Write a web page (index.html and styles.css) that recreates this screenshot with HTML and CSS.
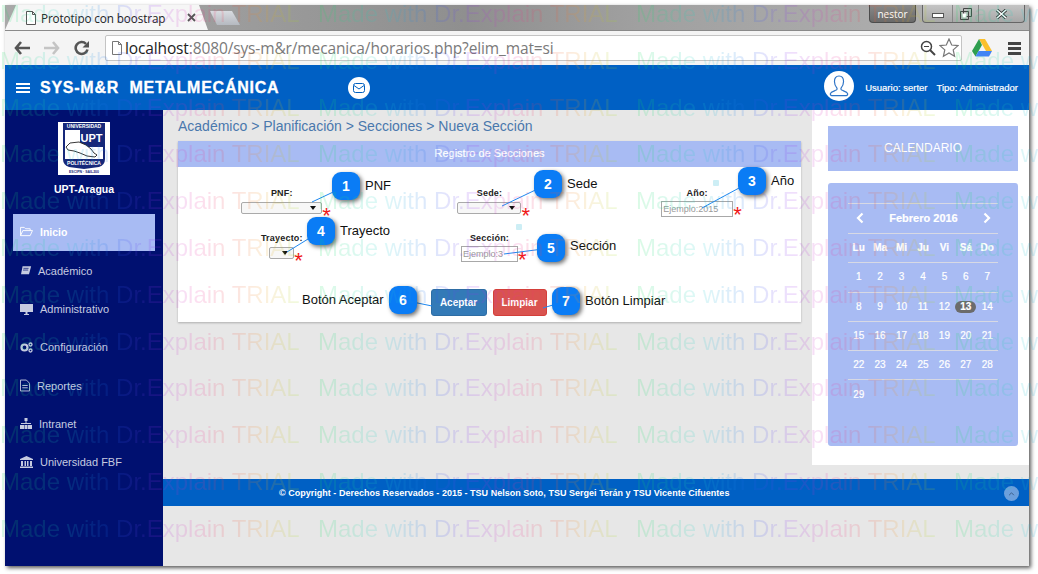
FILE: index.html
```html
<!DOCTYPE html>
<html lang="es">
<head>
<meta charset="utf-8">
<title>Prototipo con boostrap</title>
<link rel="stylesheet" href="styles.css">
</head>
<body>
<div class="window">
  <div class="tabstrip">
    <div class="tab">
      <svg class="tab-file" viewBox="0 0 12 14" width="12" height="14"><path d="M1.5.5h6l3 3v10h-9z M7.5.5v3h3" fill="#fff" stroke="#555"/></svg>
      <span class="tab-title">Prototipo con boostrap</span>
      <svg class="tab-close" viewBox="0 0 9 9" width="9" height="9"><path d="M1 1l7 7M8 1l-7 7" stroke="#555" stroke-width="1.8"/></svg>
    </div>
    <div class="newtab"></div>
    <div class="spacer"></div>
    <div class="user-chip">nestor</div>
    <div class="winbtns">
      <div class="winbtn wb-min"><svg viewBox="0 0 12 6" width="12" height="6"><rect x=".5" y=".5" width="11" height="4" fill="#fff" stroke="#555"/></svg></div>
      <div class="winbtn wb-max"><svg viewBox="0 0 12 12" width="12" height="12"><path d="M3.5.5h8v8h-8zM.5 3.5h8v8h-8z" fill="none" stroke="#444"/><rect x="2.5" y="5.5" width="4" height="4" fill="#fff"/></svg></div>
      <div class="winbtn wb-close"><svg viewBox="0 0 13 10" width="13" height="10"><path d="M2 1l9 8M11 1l-9 8" stroke="#333" stroke-width="3.2"/><path d="M2 1l9 8M11 1l-9 8" stroke="#fff" stroke-width="1.6"/></svg></div>
    </div>
  </div>
  <div class="toolbar">
    <svg class="tb-ico" viewBox="0 0 16 14" width="16" height="14"><path d="M7 1L2 7l5 6M2.500 7H16" fill="none" stroke="#555" stroke-width="2.6"/></svg>
    <svg class="tb-ico" viewBox="0 0 16 14" width="16" height="14"><path d="M9 1l5 6-5 6M13.500 7H0" fill="none" stroke="#c4c4c4" stroke-width="2.600"/></svg>
    <svg class="tb-ico" viewBox="0 0 16 16" width="16" height="16"><path d="M13.500 9.500A6 6 0 1 1 12 3.800" fill="none" stroke="#555" stroke-width="2.600"/><path d="M15 1v6.500H8.500z" fill="#555"/></svg>
    <div class="omnibox">
      <svg class="omni-file" viewBox="0 0 12 14" width="12" height="14"><path d="M1.500.5h6l3 3v10h-9z M7.500.5v3h3" fill="#fff" stroke="#777"/></svg>
      <span class="url"><span class="host">localhost</span>:8080/sys-m&amp;r/mecanica/horarios.php?elim_mat=si</span>
      <span class="omni-gap"></span>
      <svg viewBox="0 0 16 16" width="16" height="16"><circle cx="6.500" cy="6.500" r="5" fill="none" stroke="#444" stroke-width="1.500"/><path d="M10 10l5 5" stroke="#444" stroke-width="2"/><path d="M4 6.500h5" stroke="#444"/></svg>
      <svg class="omni-star" viewBox="0 0 20 20" width="20" height="20"><path d="M10 1l2.700 6 6.300.6-4.800 4.300 1.400 6.400L10 15l-5.600 3.300 1.400-6.400L1 7.600 7.300 7z" fill="#fff" stroke="#777" stroke-width="1.200"/></svg>
    </div>
    <svg class="tb-drive" viewBox="0 0 20 18" width="20" height="18"><path d="M7 0h6l7 12h-6z" fill="#fbc02d"/><path d="M7 0l3 6-6.500 11.500L0 12z" fill="#2e9e4f"/><path d="M6.500 12H20l-3 5.500H3.500z" fill="#4285f4"/></svg>
    <div class="tb-menu"><i></i><i></i><i></i></div>
  </div>

  <header class="appbar">
    <svg class="bars" viewBox="0 0 14 10" width="14" height="10"><path d="M0 0h14v2H0zM0 4h14v2H0zM0 8h14v2H0z" fill="#fff"/></svg>
    <span class="brand">SYS-M&amp;R&nbsp; METALMECÁNICA</span>
    <span class="mail"><svg viewBox="0 0 12 10" width="12" height="10"><rect x=".5" y=".5" width="11" height="9" rx="2" fill="none" stroke="#0060c0"/><path d="M1 2.500l5 3.500 5-3.500" fill="none" stroke="#0060c0"/></svg></span>
    <span class="bar-gap"></span>
    <span class="avatar"><svg viewBox="0 0 22 24" width="20" height="22"><path d="M11 1c-3.600 0-5 2.800-5 6 0 3 1.300 5.500 2.600 7 .5.800.3 2-.6 2.500-2 1-6 1.800-6.500 3.800-.2 1 .3 2.200 1.500 2.200h16c1.200 0 1.700-1.200 1.500-2.200-.5-2-4.500-2.800-6.500-3.800-.9-.5-1.100-1.700-.6-2.500 1.300-1.500 2.600-4 2.600-7 0-3.200-1.400-6-5-6z" fill="none" stroke="#2f74c6" stroke-width="1.300"/></svg></span>
    <span class="who">Usuario: serter</span>
    <span class="who who-2">Tipo: Administrador</span>
  </header>

  <div class="body">
    <aside class="sidebar">
      <svg class="logo" viewBox="0 0 52 53" width="52" height="53">
        <rect width="52" height="53" fill="#fff"/>
        <path d="M5 1h42v36q0 6-6 8l-15 2-15-2q-6-2-6-8z" fill="#16287a"/>
        <rect x="7" y="8" width="38" height="29" fill="#fff"/>
        <rect x="22" y="8" width="23" height="17" fill="#16287a"/>
        <path d="M8 25l4-4 9-1 7 3 5 4 3 4 3 2-2 2-8-1-7-3-6-2-6-1z" fill="#fff" stroke="#222" stroke-width=".9"/>
        <text class="logo-big" x="33.500" y="20">UPT</text>
        <text class="logo-tiny" x="26" y="6">UNIVERSIDAD</text>
        <text class="logo-tiny" x="26" y="43">POLITÉCNICA</text>
        <text class="logo-micro" x="26" y="51">ESCIPN · SAIL200</text>
      </svg>
      <div class="school">UPT-Aragua</div>
      <nav class="nav">
        <a class="item active"><svg viewBox="0 0 14 12" width="13" height="11"><path d="M.5 10.500V1.500h4l1.500 1.500h5v2M.5 10.500l2.500-5.500h10.500l-2.500 5.500z" fill="none" stroke="#fff"/></svg><span class="tx-0">Inicio</span></a>
        <a class="item"><svg viewBox="0 0 14 12" width="12" height="11"><path d="M3 1h10l-2.500 9.500H1.200z" fill="#c6cbe0"/><path d="M4 3.500h6M3.500 5.500h6" stroke="#00106e" stroke-width=".8"/></svg><span class="tx-1">Académico</span></a>
        <a class="item"><svg viewBox="0 0 13 12" width="13" height="12"><path d="M0 1h13v8H0zM4 11h5v1H4zM5.500 9h2v2h-2z" fill="#c6cbe0"/></svg><span class="tx-0">Administrativo</span></a>
        <a class="item"><svg viewBox="0 0 13 11" width="13" height="11"><circle cx="4.500" cy="5.500" r="3" fill="none" stroke="#c6cbe0" stroke-width="2.200"/><circle cx="10.500" cy="2.500" r="1.500" fill="none" stroke="#c6cbe0" stroke-width="1.300"/><circle cx="10.500" cy="8.500" r="1.500" fill="none" stroke="#c6cbe0" stroke-width="1.300"/></svg><span class="tx-0">Configuración</span></a>
        <a class="item"><svg viewBox="0 0 11 13" width="10" height="13"><path d="M.5.500h6.500l3.500 3.500v8.500H.5z" fill="none" stroke="#c6cbe0"/><path d="M2.500 6.500h6M2.500 9h6" stroke="#c6cbe0"/></svg><span class="tx-2">Reportes</span></a>
        <a class="item"><svg viewBox="0 0 12 11" width="12" height="11"><path d="M4.500 0h3v3h-3zM5.500 3h1v2h-1zM1 5h10v1H1zM0 7h4v4H0zM4.500 7h3v4h-3zM8 7h4v4H8z" fill="#c6cbe0"/></svg><span class="tx-3">Intranet</span></a>
        <a class="item"><svg viewBox="0 0 13 12" width="13" height="12"><path d="M6.500 0l6.500 3v1H0V3zM1 5h2v5H1zM4.500 5h1.500v5H4.500zM7 5h1.500v5H7zM10 5h2v5h-2zM0 10.500h13V12H0z" fill="#c6cbe0"/></svg><span class="tx-0">Universidad FBF</span></a>
      </nav>
    </aside>

    <div class="main">
      <div class="columns">
        <section class="content">
          <div class="crumbs">Académico &gt; Planificación &gt; Secciones &gt; Nueva Sección</div>
          <div class="panel">
            <div class="panel-head">Registro de Secciones</div>
            <form class="form">
              <div class="field"><label>PNF:</label><div class="ctl"><span class="sel sel-pnf"></span><b class="req">*</b></div></div>
              <div class="field"><label>Sede:</label><div class="ctl"><span class="sel sel-sede"></span><b class="req">*</b></div></div>
              <div class="field field-in"><label>Año:</label><div class="ctl"><span class="inp inp-ano">Ejemplo:2015</span><b class="req">*</b></div><i class="dot dot-ano"></i></div>
              <div class="field"><label>Trayecto:</label><div class="ctl"><span class="sel sel-tra"></span><b class="req">*</b></div></div>
              <div class="field field-in"><label>Sección:</label><div class="ctl"><span class="inp inp-sec">Ejemplo:3</span><b class="req">*</b></div><i class="dot dot-sec"></i></div>
            </form>
            <div class="actions">
              <button type="button" class="btn btn-blue">Aceptar</button>
              <button type="button" class="btn btn-red">Limpiar</button>
            </div>
          </div>
        </section>
        <aside class="rail">
          <div class="cal-title">CALENDARIO</div>
          <div class="cal">
            <div class="cal-head">
              <svg viewBox="0 0 8 12" width="8" height="12"><path d="M6.500 1.500L2 6l4.500 4.500" fill="none" stroke="#fff" stroke-width="2.200"/></svg>
              <span>Febrero 2016</span>
              <svg viewBox="0 0 8 12" width="8" height="12"><path d="M1.500 1.500L6 6l-4.500 4.500" fill="none" stroke="#fff" stroke-width="2.200"/></svg>
            </div>
            <div class="cal-row cal-days"><span>Lu</span><span>Ma</span><span>Mi</span><span>Ju</span><span>Vi</span><span>Sá</span><span>Do</span></div>
            <div class="cal-row"><span>1</span><span>2</span><span>3</span><span>4</span><span>5</span><span>6</span><span>7</span></div>
            <div class="cal-row"><span>8</span><span>9</span><span>10</span><span>11</span><span>12</span><span class="today">13</span><span>14</span></div>
            <div class="cal-row"><span>15</span><span>16</span><span>17</span><span>18</span><span>19</span><span>20</span><span>21</span></div>
            <div class="cal-row"><span>22</span><span>23</span><span>24</span><span>25</span><span>26</span><span>27</span><span>28</span></div>
            <div class="cal-row"><span>29</span></div>
          </div>
        </aside>
      </div>
      <footer class="foot">
        <span>© Copyright - Derechos Reservados - 2015 - TSU Nelson Soto, TSU Sergei Terán y TSU Vicente Cifuentes</span>
        <span class="totop"><svg viewBox="0 0 8 5" width="7" height="4"><path d="M1 4l3-3 3 3" fill="none" stroke="#34507a"/></svg></span>
      </footer>
    </div>
  </div>
</div>

<svg class="leaders" width="1038" height="574" viewBox="0 0 1038 574">
  <g stroke="#1e88f0" stroke-width="1" fill="none">
    <path d="M346 186L312 202"/>
    <path d="M548 184L502 206"/>
    <path d="M752 181L702 208"/>
    <path d="M321 231L287 252"/>
    <path d="M551 248L504 254"/>
    <path d="M403 300L432 306"/>
    <path d="M566 301L543 308"/>
  </g>
</svg>
<div class="note n1">1</div><span class="note-tx t1">PNF</span>
<div class="note n2">2</div><span class="note-tx t2">Sede</span>
<div class="note n3">3</div><span class="note-tx t3">Año</span>
<div class="note n4">4</div><span class="note-tx t4">Trayecto</span>
<div class="note n5">5</div><span class="note-tx t5">Sección</span>
<div class="note n6">6</div><span class="note-tx t6">Botón Aceptar</span>
<div class="note n7">7</div><span class="note-tx t7">Botón Limpiar</span>

<div class="wm" aria-hidden="true">
  <div class="wm-row"><span>Made with Dr.Explain TRIAL</span><span>Made with Dr.Explain TRIAL</span><span>Made with Dr.Explain TRIAL</span><span>Made with Dr.Explain TRIAL</span></div>
  <div class="wm-row"><span>Made with Dr.Explain TRIAL</span><span>Made with Dr.Explain TRIAL</span><span>Made with Dr.Explain TRIAL</span><span>Made with Dr.Explain TRIAL</span></div>
  <div class="wm-row"><span>Made with Dr.Explain TRIAL</span><span>Made with Dr.Explain TRIAL</span><span>Made with Dr.Explain TRIAL</span><span>Made with Dr.Explain TRIAL</span></div>
  <div class="wm-row"><span>Made with Dr.Explain TRIAL</span><span>Made with Dr.Explain TRIAL</span><span>Made with Dr.Explain TRIAL</span><span>Made with Dr.Explain TRIAL</span></div>
  <div class="wm-row"><span>Made with Dr.Explain TRIAL</span><span>Made with Dr.Explain TRIAL</span><span>Made with Dr.Explain TRIAL</span><span>Made with Dr.Explain TRIAL</span></div>
  <div class="wm-row"><span>Made with Dr.Explain TRIAL</span><span>Made with Dr.Explain TRIAL</span><span>Made with Dr.Explain TRIAL</span><span>Made with Dr.Explain TRIAL</span></div>
  <div class="wm-row"><span>Made with Dr.Explain TRIAL</span><span>Made with Dr.Explain TRIAL</span><span>Made with Dr.Explain TRIAL</span><span>Made with Dr.Explain TRIAL</span></div>
  <div class="wm-row"><span>Made with Dr.Explain TRIAL</span><span>Made with Dr.Explain TRIAL</span><span>Made with Dr.Explain TRIAL</span><span>Made with Dr.Explain TRIAL</span></div>
  <div class="wm-row"><span>Made with Dr.Explain TRIAL</span><span>Made with Dr.Explain TRIAL</span><span>Made with Dr.Explain TRIAL</span><span>Made with Dr.Explain TRIAL</span></div>
  <div class="wm-row"><span>Made with Dr.Explain TRIAL</span><span>Made with Dr.Explain TRIAL</span><span>Made with Dr.Explain TRIAL</span><span>Made with Dr.Explain TRIAL</span></div>
  <div class="wm-row"><span>Made with Dr.Explain TRIAL</span><span>Made with Dr.Explain TRIAL</span><span>Made with Dr.Explain TRIAL</span><span>Made with Dr.Explain TRIAL</span></div>
  <div class="wm-row"><span>Made with Dr.Explain TRIAL</span><span>Made with Dr.Explain TRIAL</span><span>Made with Dr.Explain TRIAL</span><span>Made with Dr.Explain TRIAL</span></div>
</div>
</body>
</html>
```
FILE: styles.css
```css
* { box-sizing: border-box; }
html, body { margin: 0; height: 100%; }
body {
  position: relative;
  width: 1038px;
  height: 574px;
  overflow: hidden;
  background: #fff;
  font-family: "Liberation Sans", Arial, sans-serif;
}

/* browser window */
.window {
  margin: 5px 0 0 5px;
  width: 1024px;
  height: 561px;
  display: flex;
  flex-direction: column;
  box-shadow: 2px 2px 4px rgba(0,0,0,.65);
}
.tabstrip {
  height: 25px;
  flex: none;
  display: flex;
  align-items: flex-start;
  background: linear-gradient(90deg, #a9a9a9 0%, #8f8f8f 45%, #a0a0a0 62%, #b3b3b3 100%);
}
.tab {
  width: 203px;
  height: 25px;
  flex: none;
  display: flex;
  align-items: center;
  padding: 0 0 0 20px;
  background: #f6f6f6;
  clip-path: polygon(0 100%, 11px 0, 194px 0, 203px 100%);
}
.tab-title {
  margin-left: 4px;
  font: 11.700px "Open Sans", sans-serif;
  color: #222;
  letter-spacing: -.1px;
  white-space: nowrap;
}
.tab-close { margin-left: 22px; }
.newtab {
  width: 30px;
  height: 14px;
  margin: 6px 0 0 2px;
  background: linear-gradient(#d8dbe0, #b5b9c0);
  clip-path: polygon(0 0, 22px 0, 30px 100%, 7px 100%);
}
.spacer { flex: 1; }
.user-chip {
  width: 47px;
  height: 18px;
  margin-right: 6px;
  border: 1px solid #4c4c4c;
  border-top: 0;
  border-radius: 0 0 4px 4px;
  background: linear-gradient(#888, #6a6a6a);
  color: #fff;
  font: 10px/19px "Open Sans", sans-serif;
  text-align: center;
}
.winbtns {
  display: flex;
  height: 18px;
  margin-right: 4px;
  border: 1px solid #666;
  border-top: 0;
  border-radius: 0 0 4px 4px;
  background: linear-gradient(#c4c4c4, #a8a8a8);
}
.winbtn { display: flex; align-items: center; justify-content: center; border-left: 1px solid #888; }
.winbtn:first-child { border-left: 0; }
.wb-min { width: 29px; padding-top: 5px; }
.wb-max { width: 26px; }
.wb-close { width: 46px; }

.toolbar {
  height: 35px;
  flex: none;
  display: flex;
  align-items: center;
  padding: 0 8px 0 9px;
  background: #f4f4f4;
  border-top: 1px solid #8a8a8a;
}
.tb-ico { margin-right: 14px; flex: none; }
.omnibox {
  width: 861px;
  height: 26px;
  margin-left: 1px;
  display: flex;
  align-items: center;
  padding: 0 2px 0 5px;
  background: #fff;
  border: 1px solid #c4c4c4;
  border-radius: 2px;
}
.url {
  margin-left: 2px;
  font: 15.500px "Open Sans", sans-serif;
  letter-spacing: -.13px;
  color: #7a7a7a;
  white-space: nowrap;
}
.host { color: #222; }
.omni-gap { flex: 1; }
.omni-star { margin-left: 3px; }
.tb-drive { margin-left: 10px; flex: none; }
.tb-menu { margin-left: 16px; display: flex; flex-direction: column; gap: 2px; width: 13px; }
.tb-menu i { display: block; height: 3px; background: #444; }

/* application bar */
.appbar {
  height: 45px;
  flex: none;
  display: flex;
  align-items: center;
  padding: 0 11px;
  background: #0060c4;
  color: #fff;
}
.bars { flex: none; margin-top: 1px; }
.brand {
  margin-left: 10px;
  font-size: 16px;
  font-weight: 700;
  letter-spacing: .75px;
  -webkit-text-stroke: .3px #fff;
  white-space: nowrap;
}
.mail {
  margin-left: 69px;
  width: 22px;
  height: 22px;
  border-radius: 50%;
  background: #fff;
  display: flex;
  align-items: center;
  justify-content: center;
}
.bar-gap { flex: 1; }
.avatar {
  width: 30px;
  height: 30px;
  border-radius: 50%;
  background: #fff;
  display: flex;
  align-items: center;
  justify-content: center;
  margin-top: -3px;
}
.who { margin-left: 11px; font-size: 9.500px; white-space: nowrap; -webkit-text-stroke: .2px #fff; }
.who-2 { margin-left: 9px; }

.body { flex: 1; display: flex; min-height: 0; }

/* sidebar */
.sidebar {
  width: 158px;
  flex: none;
  background: #001070;
  padding-top: 12px;
  display: flex;
  flex-direction: column;
  align-items: center;
}
.logo { flex: none; display: block; margin-left: -1px; }
.logo-big { font: 700 11px "Liberation Sans", sans-serif; fill: #fff; text-anchor: middle; }
.logo-tiny { font: 700 5px "Liberation Sans", sans-serif; fill: #fff; text-anchor: middle; }
.logo-micro { font: 700 3.500px "Liberation Sans", sans-serif; fill: #16287a; text-anchor: middle; }
.school {
  margin-top: 8px;
  font-size: 10.500px;
  line-height: 12px;
  font-weight: 700;
  color: #fff;
}
.nav {
  align-self: stretch;
  margin-top: 19px;
  padding: 0 8px;
  display: flex;
  flex-direction: column;
}
.item {
  height: 38.300px;
  display: flex;
  align-items: center;
  padding: 0 0 2px 7px;
  gap: 7px;
  color: #c6cbe0;
  font-size: 11px;
  white-space: nowrap;
}
.item svg { flex: none; }
.item.active { height: 37px; margin-bottom: 1.500px; background: #a8bbf3; color: #fff; font-weight: 700; font-size: 10.500px; }
.tx-1 { margin-left: -1px; }
.tx-2 { margin-left: 0; }
.tx-3 { margin-left: 0; }

/* main */
.main { flex: 1; min-width: 0; display: flex; flex-direction: column; background: #e7e7e7; }
.columns { display: flex; height: 355px; flex: none; }
.content { width: 649px; flex: none; padding: 8px 0 0 15px; }
.crumbs { font-size: 14px; line-height: 17px; color: #4a78ad; white-space: nowrap; }
.panel {
  margin-top: 6px;
  width: 623px;
  height: 181px;
  background: #fff;
  box-shadow: 0 1px 2px rgba(0,0,0,.25);
  display: flex;
  flex-direction: column;
}
.panel-head {
  height: 26px;
  flex: none;
  background: #a8bbf3;
  color: #fff;
  font-size: 11px;
  line-height: 24px;
  text-align: center;
  -webkit-text-stroke: .2px #fff;
}
.form {
  display: grid;
  grid-template-columns: repeat(3, 1fr);
  grid-auto-rows: 45px;
  padding-top: 21px;
}
.field { position: relative; display: flex; flex-direction: column; align-items: center; }
.field label { font-size: 9px; line-height: 11px; height: 14px; font-weight: 700; color: #222; letter-spacing: .2px; }
.field-in label { height: 13px; }
.ctl { position: relative; }
.sel {
  display: block;
  height: 12px;
  border: 1px solid #aaa;
  border-radius: 2px;
  background: #f7f7f7;
  position: relative;
}
.sel::after {
  content: "";
  position: absolute;
  right: 5px;
  top: 3px;
  border: 3px solid transparent;
  border-top: 4px solid #111;
  border-bottom: 0;
}
.sel-pnf { width: 81px; }
.sel-sede { width: 64px; }
.sel-tra { width: 25px; }
.inp {
  display: block;
  height: 16px;
  border: 1px solid #a8a8a8;
  background: #fff;
  color: #9a9a9a;
  font-size: 9px;
  line-height: 14px;
  padding-left: 1px;
  white-space: nowrap;
  overflow: hidden;
}
.inp-ano { width: 72px; }
.inp-sec { width: 57px; }
.req {
  position: absolute;
  left: 100%;
  top: 3px;
  color: #f01818;
  font-size: 22px;
  line-height: 22px;
  font-weight: 400;
}
.dot {
  position: absolute;
  width: 6px;
  height: 6px;
  border-radius: 1px;
  background: #cdeef5;
}
.dot-ano { left: 120px; top: -8px; }
.dot-sec { left: 130px; top: -9px; }
.actions { display: flex; justify-content: center; gap: 6px; margin-top: 11px; padding-right: 2px; }
.btn {
  height: 27px;
  padding: 0;
  border: 1px solid #2e6da4;
  border-radius: 3px;
  background: #337ab7;
  color: #fff;
  font: 700 10px "Liberation Sans", sans-serif;
}
.btn-blue { width: 56px; }
.btn-red { width: 54px; background: #d9534f; border-color: #d43f3a; }

/* rail */
.rail { flex: 1; background: #fff; padding: 16px 11px 0 16px; }
.cal-title {
  height: 45px;
  background: #a8bbf3;
  color: #fff;
  font-size: 12px;
  line-height: 44px;
  text-align: center;
}
.cal {
  margin-top: 12px;
  height: 263px;
  background: #a8bbf3;
  border-radius: 3px;
  padding: 20px 20px 0;
  color: #fff;
  font-size: 10px;
  -webkit-text-stroke: .2px #fff;
}
.cal-head {
  height: 30px;
  border-top: 1px solid #d7d9e4;
  display: flex;
  align-items: center;
  justify-content: space-between;
  padding: 0 7px 2px 8px;
  font-size: 11px;
  font-weight: 700;
}
.cal-row {
  height: 29.300px;
  display: grid;
  grid-template-columns: repeat(7, 1fr);
  align-items: center;
  justify-items: center;
  border-top: 1px solid #d7d9e4;
}
.cal-row.cal-days { font-weight: 700; }
.cal-row span { min-width: 21px; text-align: center; line-height: 12px; }
.today { background: #6b6b6b; border-radius: 6px; font-weight: 700; }

/* footer */
.foot {
  margin-top: 14px;
  height: 27px;
  flex: none;
  display: flex;
  align-items: center;
  padding: 0 10px 0 116px;
  background: #0060c4;
  color: #fff;
  font-size: 9px;
  font-weight: 700;
  letter-spacing: .02px;
  white-space: nowrap;
  position: relative;
}
.foot span:first-child { flex: 1; }
.totop {
  width: 15px;
  height: 15px;
  border-radius: 50%;
  background: #6c9fdc;
  display: flex;
  align-items: center;
  justify-content: center;
  margin-top: 2px;
}

/* numbered callouts over the screenshot */
.leaders { position: absolute; left: 0; top: 0; pointer-events: none; }
.note {
  position: absolute;
  width: 28px;
  height: 28px;
  border-radius: 9px;
  background: #0a7cf5;
  color: #fff;
  font-size: 14px;
  line-height: 28px;
  font-weight: 700;
  text-align: center;
  box-shadow: 2px 2px 4px rgba(0,0,0,.55);
}
.note-tx { position: absolute; font-size: 13px; line-height: 16px; color: #111; white-space: nowrap; }
.n1 { left: 332px; top: 172px; } .t1 { left: 365px; top: 178px; }
.n2 { left: 534px; top: 170px; } .t2 { left: 567px; top: 176px; }
.n3 { left: 738px; top: 167px; } .t3 { left: 771px; top: 173px; }
.n4 { left: 307px; top: 217px; } .t4 { left: 340px; top: 223px; }
.n5 { left: 537px; top: 234px; } .t5 { left: 570px; top: 238px; }
.n6 { left: 389px; top: 286px; } .t6 { left: 302px; top: 292px; }
.n7 { left: 552px; top: 287px; } .t7 { left: 585px; top: 293px; }

/* trial watermark */
.wm {
  position: absolute;
  left: 0;
  top: 0;
  width: 1038px;
  height: 574px;
  overflow: hidden;
  display: flex;
  flex-wrap: wrap;
  align-content: flex-start;
  pointer-events: none;
  opacity: .15;
}
.wm-row { width: 1272px; flex: none; height: 46.800px; display: flex; white-space: nowrap; font-size: 24px; line-height: 27px; }
.wm-row span {
  flex: none;
  width: 318px;
  background: linear-gradient(90deg, #12e05a 0%, #20d0d0 22%, #2060f0 38%, #9a30f0 52%, #f030a0 66%, #f04040 76%, #f0a020 88%, #a0e020 100%);
  background-size: 300px 100%;
  background-repeat: no-repeat;
  -webkit-background-clip: text;
  background-clip: text;
  color: transparent;
}
```
